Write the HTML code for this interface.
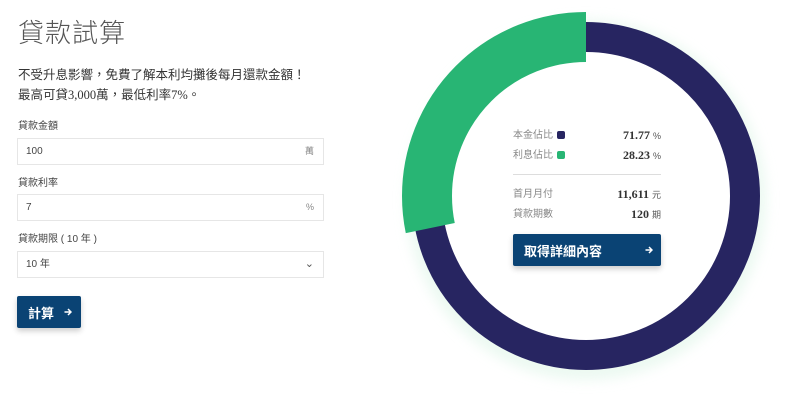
<!DOCTYPE html>
<html><head><meta charset="utf-8"><style>
*{margin:0;padding:0;box-sizing:border-box}
body{width:800px;height:401px;background:#fff;font-family:"Liberation Serif","Noto Sans CJK TC",serif;color:#333;position:relative;overflow:hidden}
.a{position:absolute}
h1{position:absolute;left:18px;top:15px;line-height:36px;font-family:"Liberation Sans","Noto Sans CJK TC",sans-serif;font-weight:300;font-size:26px;color:#555;letter-spacing:1px}
.p{left:18px;font-size:12.5px;line-height:18px;color:#333;font-family:"Liberation Serif","Noto Sans CJK TC",serif}
.lbl{left:18px;font-size:10px;line-height:14px;color:#444;font-family:"Liberation Sans","Noto Sans CJK TC",sans-serif}
.in{left:17px;width:307px;height:27px;border:1px solid #e6e6e6;font-size:10px;line-height:25px;color:#444;padding:0 8px;font-family:"Liberation Sans","Noto Sans CJK TC",sans-serif}
.in span{position:absolute;right:9px;top:0;line-height:25px;color:#888;font-size:9px}
.btn{background:#0a4374;color:#fff;border-radius:2px;box-shadow:0 3px 6px rgba(0,0,0,.2);font-family:"Liberation Sans","Noto Sans CJK TC",sans-serif;font-weight:bold;display:flex;align-items:center}
.btn svg{position:absolute;right:9px;top:12px}
.row{position:absolute;left:513px;width:148px;height:16px;display:flex;align-items:center;justify-content:space-between}
.r{font-size:10px;line-height:16px;color:#888;font-family:"Liberation Sans","Noto Sans CJK TC",sans-serif;position:relative;top:1px}
.v{font-size:12px;line-height:16px;font-weight:bold;color:#333}
.v small{font-weight:normal;font-size:9px;color:#555;font-family:"Liberation Sans","Noto Sans CJK TC",sans-serif}
.sq{display:inline-block;width:8px;height:8px;border-radius:2px;margin-left:4px;vertical-align:-1px}
</style></head><body>
<h1>貸款試算</h1>
<div class="a p" style="top:66px">不受升息影響，免費了解本利均攤後每月還款金額！</div>
<div class="a p" style="top:86px">最高可貸3,000萬，最低利率7%。</div>
<div class="a lbl" style="top:120px">貸款金額</div>
<div class="a in" style="top:138px">100<span>萬</span></div>
<div class="a lbl" style="top:177px">貸款利率</div>
<div class="a in" style="top:194px">7<span>%</span></div>
<div class="a lbl" style="top:233px">貸款期限 ( 10 年 )</div>
<div class="a in" style="top:251px">10 年<span style="font-size:11px;color:#555">⌄</span></div>
<div class="a btn" style="left:17px;top:296px;width:64px;height:32px;font-size:13px;padding-left:11px">計算<svg width="8" height="8" viewBox="0 0 8 8"><path d="M0.5 4H7M4 1L7 4L4 7" stroke="#fff" stroke-width="1.5" fill="none"/></svg></div>
<svg class="a" style="left:0;top:0" width="800" height="401">
<defs><filter id="s" x="-20%" y="-20%" width="140%" height="140%"><feGaussianBlur stdDeviation="6"/></filter></defs>
<circle cx="586" cy="200" r="170" fill="none" stroke="#dff5e8" stroke-width="20" filter="url(#s)" opacity=".6"/>
<circle cx="586" cy="196" r="159" fill="none" stroke="#272561" stroke-width="30"/>
<circle cx="586" cy="196" r="159" fill="none" stroke="#28b574" stroke-width="50" stroke-dasharray="282 2000" transform="rotate(-90 586 196) scale(1,-1) translate(0,-392)"/>
</svg>
<div class="row" style="top:127px"><div class="r">本金佔比<span class="sq" style="background:#272561"></span></div><div class="v">71.77 <small>%</small></div></div>
<div class="row" style="top:147px"><div class="r">利息佔比<span class="sq" style="background:#28b574"></span></div><div class="v">28.23 <small>%</small></div></div>
<div class="a" style="left:513px;top:174px;width:148px;height:1px;background:#ddd"></div>
<div class="row" style="top:186px"><div class="r">首月月付</div><div class="v">11,611 <small>元</small></div></div>
<div class="row" style="top:206px"><div class="r">貸款期數</div><div class="v">120 <small>期</small></div></div>
<div class="a btn" style="left:513px;top:234px;width:148px;height:32px;font-size:13px;padding-left:11px">取得詳細內容<svg width="8" height="8" viewBox="0 0 8 8" style="right:8px"><path d="M0.5 4H7M4 1L7 4L4 7" stroke="#fff" stroke-width="1.5" fill="none"/></svg></div>
</body></html>
